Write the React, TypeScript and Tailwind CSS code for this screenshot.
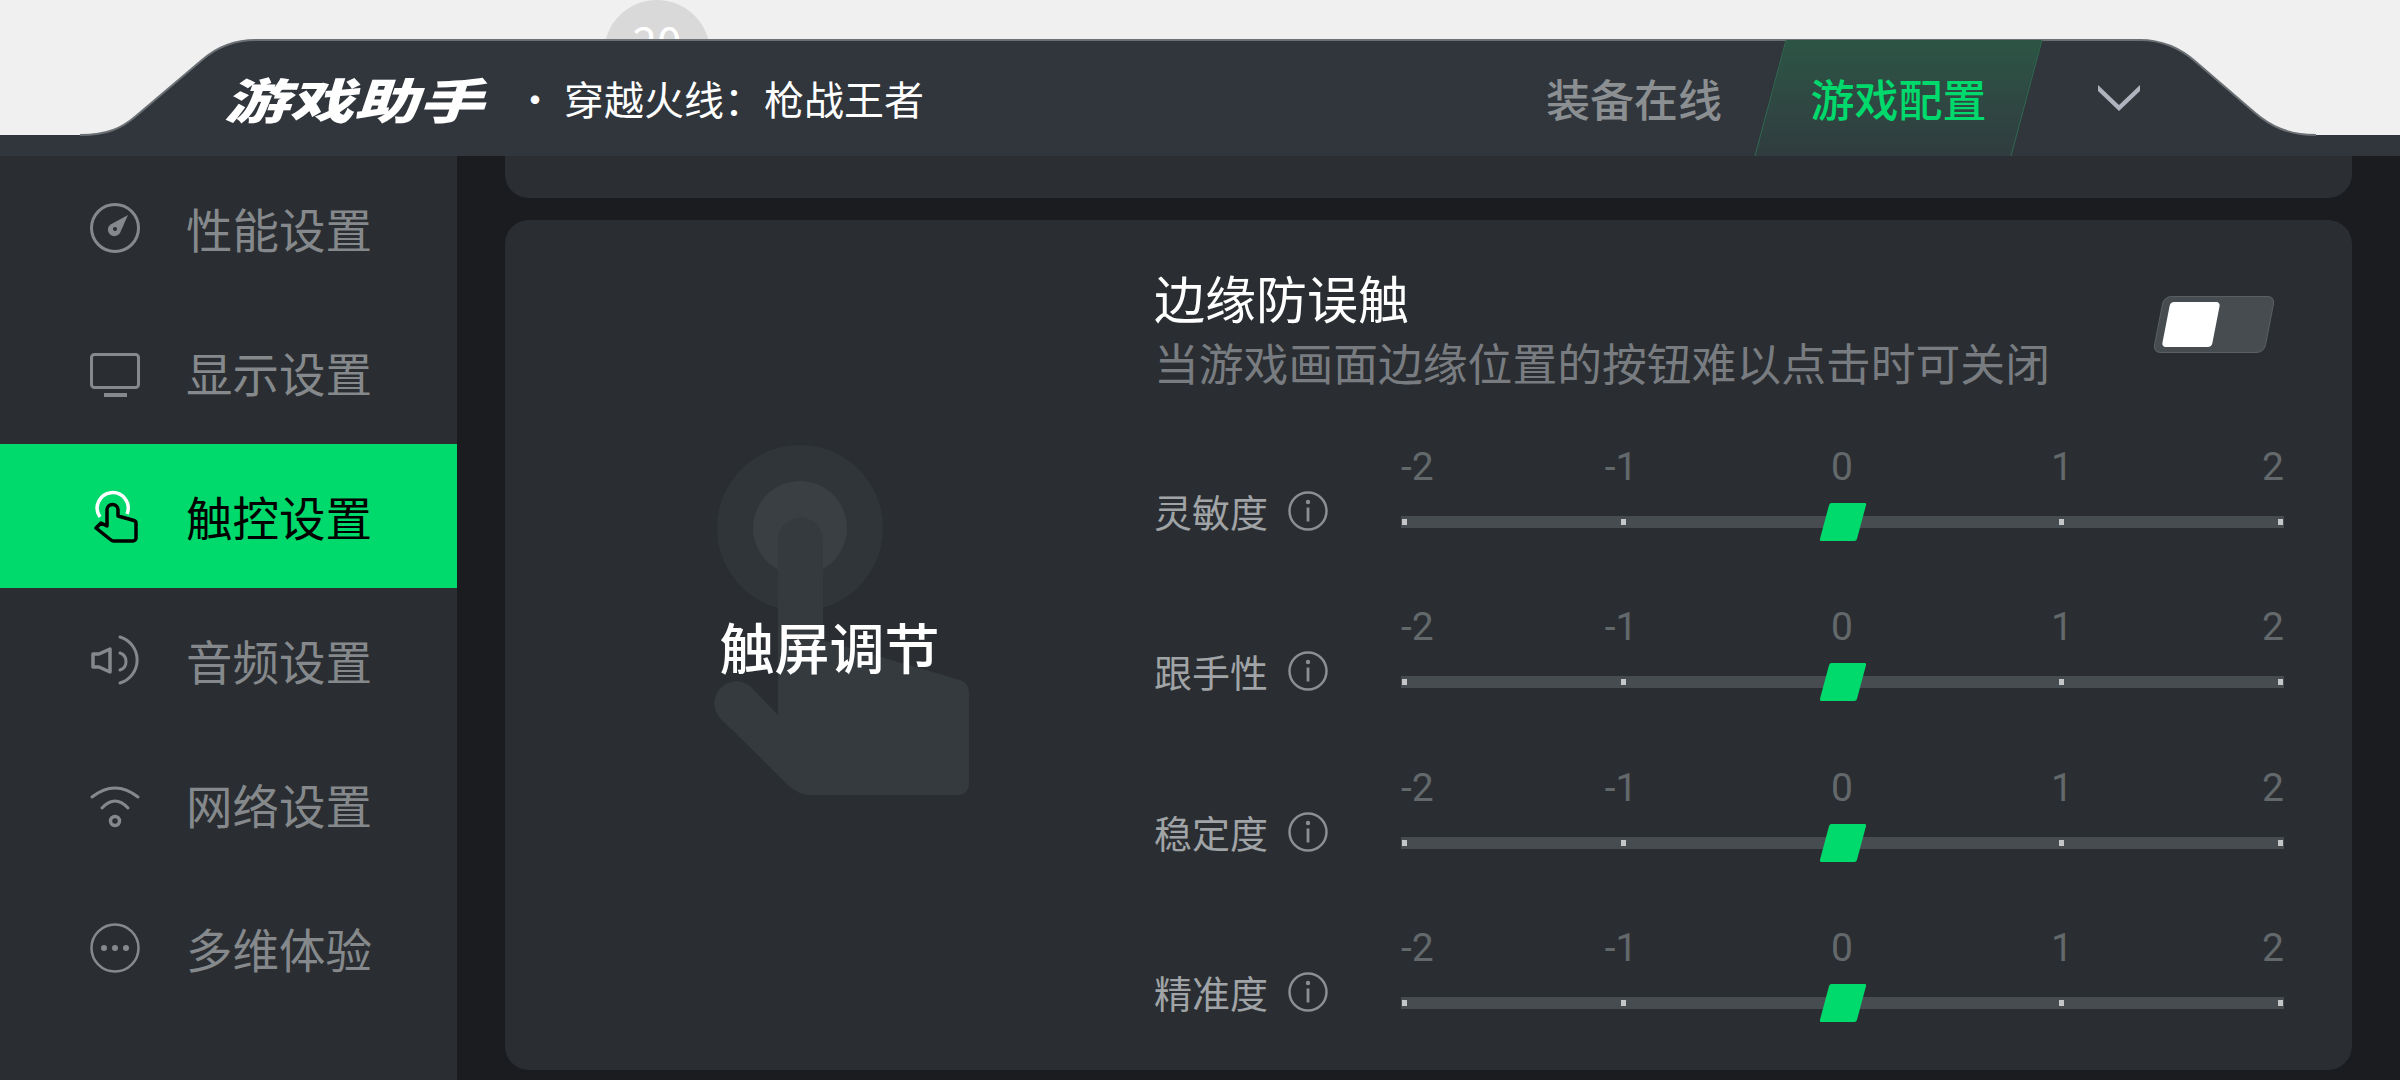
import React from "react";

const cjk = "font-['Noto_Sans_CJK_SC',sans-serif]";

const iconStroke = {
    fill: "none",
    stroke: "currentColor",
    strokeLinecap: "round" as const,
    strokeLinejoin: "round" as const,
};

const GaugeIcon = () => (
    <svg viewBox="0 0 50 50" className="w-[50px] h-[50px] overflow-visible">
        <circle cx="25" cy="25" r="23.5" strokeWidth="3" {...iconStroke} />
        <path d="M38 12 L30 30 a6.5 6.5 0 1 1 -9.5 -8.5 Z" fill="currentColor" />
        <circle cx="25" cy="26" r="2" fill="#2a2e32" />
    </svg>
);

const MonitorIcon = () => (
    <svg viewBox="0 0 50 50" className="w-[50px] h-[50px] overflow-visible">
        <rect x="1.5" y="7.5" width="47" height="33" rx="3" strokeWidth="3" {...iconStroke} />
        <rect x="14" y="46" width="23" height="4" fill="currentColor" />
    </svg>
);

const TouchIcon = () => (
    <svg viewBox="0 0 50 50" className="w-[50px] h-[50px] overflow-visible">
        <path d="M10 26 A15.5 15.5 0 1 1 37 23" stroke="#ffffff" strokeWidth="3.5" fill="none" />
        <path
            d="M17 35 V19 a5.5 5.5 0 0 1 11 0 V25 L44 29.5 a3 3 0 0 1 2 3 V47 a3 3 0 0 1 -3 3 H24 a4 4 0 0 1 -3 -1 L6 37 L11 32 Z"
            fill="#00d96b"
            stroke="#000000"
            strokeWidth="3.5"
            strokeLinejoin="round"
        />
    </svg>
);

const SpeakerIcon = () => (
    <svg viewBox="0 0 50 50" className="w-[50px] h-[50px] overflow-visible">
        <path d="M3 19 H9 L20 14 V37 L9 32 H3 Z" strokeWidth="3.5" {...iconStroke} />
        <path d="M30 2 A24 24 0 0 1 30 48" strokeWidth="3" {...iconStroke} />
        <path d="M30 18 A9 9 0 0 1 30 35" strokeWidth="3" {...iconStroke} />
    </svg>
);

const WifiIcon = () => (
    <svg viewBox="0 0 50 50" className="w-[50px] h-[50px] overflow-visible">
        <path d="M2 18 Q25 0 48 18" strokeWidth="3" {...iconStroke} />
        <path d="M12 29 Q25 15 38 29" strokeWidth="3" {...iconStroke} />
        <circle cx="25" cy="42" r="4.5" strokeWidth="3.5" {...iconStroke} />
    </svg>
);

const MoreIcon = () => (
    <svg viewBox="0 0 50 50" className="w-[50px] h-[50px] overflow-visible">
        <circle cx="25" cy="25" r="23.5" strokeWidth="2.5" {...iconStroke} />
        <circle cx="14" cy="25" r="3" fill="currentColor" />
        <circle cx="25" cy="25" r="3" fill="currentColor" />
        <circle cx="36" cy="25" r="3" fill="currentColor" />
    </svg>
);

const InfoIcon = () => (
    <svg viewBox="0 0 40 40" className="w-[40px] h-[40px] text-[#8b8f92]">
        <circle cx="20" cy="20" r="18.5" strokeWidth="2.5" {...iconStroke} />
        <circle cx="20" cy="11" r="2.2" fill="currentColor" />
        <rect x="18.6" y="16.5" width="2.8" height="14" fill="currentColor" />
    </svg>
);

const navItems = [
    { label: "性能设置", icon: <GaugeIcon /> },
    { label: "显示设置", icon: <MonitorIcon /> },
    { label: "触控设置", icon: <TouchIcon />, active: true },
    { label: "音频设置", icon: <SpeakerIcon /> },
    { label: "网络设置", icon: <WifiIcon /> },
    { label: "多维体验", icon: <MoreIcon /> },
];

const sliders = ["灵敏度", "跟手性", "稳定度", "精准度"];

const Header = () => (
    <header className="relative h-[156px] shrink-0 bg-[#f0f0f0] overflow-hidden">
        <div className="absolute left-[604px] top-0 w-[106px] h-[106px] rounded-full bg-[#d9d9d9] flex justify-center pt-[10px]">
            <span className={`${cjk} text-[44px] leading-[60px] text-white`}>20</span>
        </div>

        <svg viewBox="0 0 2400 156" className="absolute inset-0 w-[2400px] h-[156px]">
            <defs>
                <linearGradient id="glow" x1="0" x2="1" y1="0" y2="0">
                    <stop offset="0" stopColor="#00d96b" stopOpacity="0.15" />
                    <stop offset="0.5" stopColor="#00e070" stopOpacity="1" />
                    <stop offset="1" stopColor="#00d96b" stopOpacity="0.15" />
                </linearGradient>
            </defs>
            <path
                d="M0 135 H80 C108 135 122 128 136 116 L202 60 C218 46 236 40 256 40 H2140 C2160 40 2178 46 2196 62 L2254 112 C2270 126 2288 135 2316 135 H2400 V156 H0 Z"
                fill="#30363c"
            />
            <path
                d="M80 135 C108 135 122 128 136 116 L202 60 C218 46 236 40 256 40 H2140 C2160 40 2178 46 2196 62 L2254 112 C2270 126 2288 135 2316 135"
                fill="none"
                stroke="#6b7074"
                strokeWidth="2"
            />
            <rect x="1786" y="40" width="255" height="4" fill="url(#glow)" />
        </svg>

        <div className="relative h-full pt-[40px] flex items-center">
            <div className="flex items-center pl-[224px]">
                <span className={`${cjk} inline-block w-[261px] origin-left scale-x-[1.35] italic font-black text-[48px] leading-[60px] text-white whitespace-nowrap`}>
                    游戏助手
                </span>
                <span className={`${cjk} ml-[30px] text-[40px] leading-[60px] text-white whitespace-nowrap`}>
                    · 穿越火线：枪战王者
                </span>
            </div>

            <div className="ml-auto flex items-center h-full pr-[260px]">
                <span className={`${cjk} mr-[48px] font-medium text-[44px] text-[#8b8f92]`}>装备在线</span>
                <div className="relative w-[257px] h-full flex items-center justify-center">
                    <div className="absolute inset-0 -skew-x-[15deg] bg-gradient-to-b from-[#2c5545] to-[#303c3f] border-x border-[#2f6a50]" />
                    <span className={`${cjk} relative font-medium text-[44px] text-[#00d96b]`}>游戏配置</span>
                </div>
                <svg viewBox="0 0 42 26" className="ml-[71px] w-[42px] h-[26px] text-[#b0b3bd]">
                    <polygon points="0,0 21,20 42,0 42,6 21,26 0,6" fill="currentColor" />
                </svg>
            </div>
        </div>
    </header>
);

const Sidebar = () => (
    <nav className="w-[457px] shrink-0 bg-[#2a2e32] flex flex-col">
        {navItems.map((item) => (
            <div
                key={item.label}
                className={`h-[144px] flex items-center pl-[90px] gap-[46px] ${
                    item.active ? "bg-[#00d96b] text-black" : "text-[#85898c]"
                }`}
            >
                {item.icon}
                <span className={`${cjk} text-[46.5px] leading-[60px]`}>{item.label}</span>
            </div>
        ))}
    </nav>
);

const SliderRow = ({ label }: { label: string }) => (
    <div className="h-[160.3px] flex items-start">
        <div className="w-[247px] shrink-0 mt-[48px] flex items-center gap-[20px]">
            <span className={`${cjk} text-[38px] leading-[44px] text-[#a0a4a6]`}>{label}</span>
            <InfoIcon />
        </div>
        <div className="w-[883px]">
            <div className="h-[52px] grid grid-cols-[110px_220px_222px_218px_113px] font-['Roboto',sans-serif] text-[39px] leading-[52px] text-[#63686b]">
                <span className="text-left">-2</span>
                <span className="text-center">-1</span>
                <span className="text-center">0</span>
                <span className="text-center">1</span>
                <span className="text-right">2</span>
            </div>
            <div className="relative h-[58px] flex items-center">
                <div className="w-full h-[12px] bg-[#474c50] flex items-center justify-between px-[1px]">
                    {[0, 1, 2, 3, 4].map((n) => (
                        <i key={n} className="block w-[5px] h-[6px] bg-[#c4c6c7]" />
                    ))}
                </div>
                <div className="absolute left-1/2 top-[10px] w-[37px] h-[38px] -translate-x-1/2 -skew-x-[15deg] rounded-[2px] bg-[#00d96b]" />
            </div>
        </div>
    </div>
);

const TouchPanel = () => (
    <div className="relative w-[649px] shrink-0 flex items-center justify-center">
        <svg viewBox="0 0 280 360" className="absolute left-[195px] top-[220px] w-[280px] h-[360px]">
            <circle cx="100" cy="88" r="83" fill="#303539" />
            <circle cx="100" cy="88" r="47" fill="#3a3f43" />
            <path
                d="M78 100 a22.5 22.5 0 0 1 45 0 V200 L260 240 Q269 243 269 253 V343 Q269 355 257 355 H112 Q98 355 88 345 L19.5 277.5 A22 22 0 0 1 50.5 246.5 L78 275 Z"
                fill="#353a3e"
            />
        </svg>
        <span className={`${cjk} relative font-medium text-[55px] leading-[70px] text-white`}>触屏调节</span>
    </div>
);

const App: React.FC = () => {
    return (
        <div className="w-[2400px] h-[1080px] overflow-hidden flex flex-col bg-[#1a1c1f]">
            <Header />
            <div className="flex flex-1 min-h-0">
                <Sidebar />
                <main className="flex-1 flex flex-col gap-[22px] px-[48px]">
                    <div className="h-[42px] rounded-b-[24px] bg-[#2b2f33]" />
                    <section className="h-[850px] rounded-[24px] bg-[#2a2e32] flex">
                        <TouchPanel />
                        <div className="flex-1 pt-[47px]">
                            <div className="relative h-[174px]">
                                <div className={`${cjk} text-[51px] leading-[60px] text-white`}>边缘防误触</div>
                                <div className={`${cjk} mt-[5px] text-[44.8px] leading-[60px] text-[#787c80]`}>
                                    当游戏画面边缘位置的按钮难以点击时可关闭
                                </div>
                                <div className="absolute left-[1004px] top-[29px] w-[112px] h-[57px] -skew-x-[11deg] rounded-[8px] border border-[#5a5f63] bg-[#474c50] flex items-center pl-[7px]">
                                    <div className="w-[50px] h-[45px] rounded-[4px] bg-white" />
                                </div>
                            </div>
                            {sliders.map((label) => (
                                <SliderRow key={label} label={label} />
                            ))}
                        </div>
                    </section>
                </main>
            </div>
        </div>
    );
};

export default App;
